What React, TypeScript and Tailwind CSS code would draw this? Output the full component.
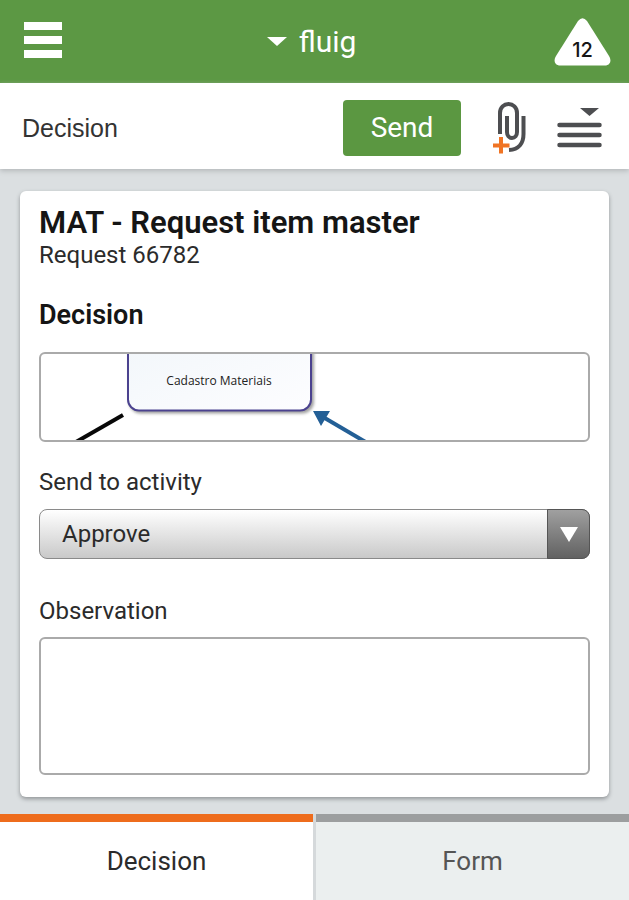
import { useState } from "react";

const Header = () => {
	return (
		<header className="grid grid-cols-[1fr_auto_1fr] items-center bg-[#5c9844] h-[83px] px-[18px]">
			<button type="button" aria-label="Menu" className="justify-self-start pb-1 pl-[6px]">
				<svg width="38" height="36" viewBox="0 0 38 36" fill="#fff">
					<rect width="38" height="8" />
					<rect y="14" width="38" height="8" />
					<rect y="28" width="38" height="8" />
				</svg>
			</button>
			<button type="button" className="flex items-center gap-3 pr-[6px] text-[30px] leading-9 text-white">
				<svg width="20" height="9" viewBox="0 0 20 9" fill="#fff">
					<path d="M0 0H20L10 9Z" />
				</svg>
				fluig
			</button>
			<button
				type="button"
				className="relative justify-self-end text-xl leading-6 font-medium text-[#151515] font-['Inter',sans-serif]"
			>
				<svg width="57" height="49" viewBox="0 0 57 49" fill="#fff">
					<path d="M24 4Q28.500-1.500 33 4L55 39C58 44 56 48.500 51 48.500H6C1 48.500-1 44 2 39Z" />
				</svg>
				<span className="absolute inset-x-0 bottom-1">12</span>
			</button>
		</header>
	);
};

const Toolbar = () => {
	return (
		<div className="relative flex items-center h-[86px] pt-[3px] pl-[22px] pr-[27px] bg-white shadow-[0_2px_5px_#b4b8ba]">
			<h1 className="flex-1 text-[25px] leading-8 text-[#333] font-['Liberation_Sans',sans-serif]">
				Decision
			</h1>
			<button type="button" className="h-14 w-[118px] rounded bg-[#5b9741] text-[28px] leading-8 text-white">
				Send
			</button>
			<button type="button" aria-label="Attach file" className="ml-8">
				<svg width="33" height="52" viewBox="0 0 33 52" fill="none">
					<g stroke="#4d4e51" strokeWidth="4">
						<path d="M7 32V11C7 5.500 11 2 15.500 2C20 2 24 5.500 24 11V30C24 33.500 22 36 19 36C16 36 14 33.500 14 30V14" />
						<path d="M30.500 14V32C30.500 41 26 47.500 16 48" />
					</g>
					<path d="M8 35V51.500M0 43.500H16.500" stroke="#f07424" strokeWidth="4" />
				</svg>
			</button>
			<button type="button" aria-label="Options" className="ml-[31px]">
				<svg width="45" height="40" viewBox="0 0 45 40">
					<path d="M23 0H42L32.500 8Z" fill="#4d4e51" />
					<path d="M2.500 17H42.500M2.500 27H42.500M2.500 37H42.500" stroke="#4d4e51" strokeWidth="4.500" strokeLinecap="round" />
				</svg>
			</button>
		</div>
	);
};

const Diagram = () => {
	return (
		<div className="mt-[21px] h-[90px] shrink-0 overflow-hidden rounded-md border-2 border-[#aaa]">
			<svg width="546" height="86" viewBox="0 0 546 86">
				<defs>
					<linearGradient id="activity" x1="0" y1="0" x2="1" y2="1">
						<stop offset="0" stopColor="#f1f6fa" />
						<stop offset="1" stopColor="#fdfdff" />
					</linearGradient>
					<filter id="shadow">
						<feDropShadow dx="2" dy="2" stdDeviation="1.500" floodColor="#777" floodOpacity="0.700" />
					</filter>
				</defs>
				<rect
					x="87"
					y="-30"
					width="183"
					height="86.500"
					rx="11"
					fill="url(#activity)"
					stroke="#4b438f"
					strokeWidth="2"
					filter="url(#shadow)"
				/>
				<text x="178" y="31" textAnchor="middle" fontSize="12" fill="#222" fontFamily="Open Sans, sans-serif">
					Cadastro Materiais
				</text>
				<path d="M35 88L82 61" stroke="#080808" strokeWidth="4" />
				<path d="M282 63L328 90" stroke="#235f96" strokeWidth="4" />
				<path d="M272 57H289L280 72Z" fill="#235f96" />
			</svg>
		</div>
	);
};

const RequestCard = () => {
	return (
		<section className="flex flex-1 flex-col rounded-md bg-white px-[19px] pt-4 pb-[22px] text-2xl leading-8 text-[#2b2b2b] shadow-[0_2px_4px_#909496]">
			<h2 className="text-[31px] leading-8 font-semibold text-[#151515]">MAT - Request item master</h2>
			<p>Request 66782</p>
			<h3 className="mt-7 text-[27px] leading-8 font-semibold text-[#151515]">Decision</h3>
			<Diagram />
			<label htmlFor="activity-select" className="mt-6">
				Send to activity
			</label>
			<div className="relative mt-[11px]">
				<select
					id="activity-select"
					className="h-[50px] w-full appearance-none rounded-lg border border-[#8a8a8a] bg-linear-to-b from-white to-[#c9c9c9] pl-[22px] text-2xl"
				>
					<option>Approve</option>
				</select>
				<div className="pointer-events-none absolute inset-y-0 right-0 flex w-[43px] items-center justify-center rounded-r-lg border border-[#555] bg-linear-to-b from-[#a0a0a0] to-[#626262]">
					<svg width="18" height="15" viewBox="0 0 18 15" fill="#fff">
						<path d="M0 0H18L9 15Z" />
					</svg>
				</div>
			</div>
			<label htmlFor="observation" className="mt-9">
				Observation
			</label>
			<textarea
				id="observation"
				className="mt-[10px] min-h-24 flex-1 resize-none rounded-md border-2 border-[#aaa] bg-white p-2"
			/>
		</section>
	);
};

const Tabs = () => {
	const [tab, setTab] = useState("decision");
	const active = "border-[#ee6c1c] bg-white text-[#2b2b2b]";
	const idle = "border-[#9c9e9f] bg-[#ebefef] text-[#555]";

	return (
		<nav className="grid grid-cols-2 gap-[3px] bg-[#d5d9db]">
			<button
				type="button"
				onClick={() => setTab("decision")}
				className={`h-[86px] border-t-8 text-[26px] leading-8 ${tab === "decision" ? active : idle}`}
			>
				Decision
			</button>
			<button
				type="button"
				onClick={() => setTab("form")}
				className={`h-[86px] border-t-8 text-[26px] leading-8 ${tab === "form" ? active : idle}`}
			>
				Form
			</button>
		</nav>
	);
};

const App = () => {
	return (
		<div className="flex min-h-screen flex-col bg-[#dbdfe1] font-['Roboto',sans-serif]">
			<Header />
			<Toolbar />
			<main className="flex flex-1 flex-col px-5 pt-[22px] pb-[17px]">
				<RequestCard />
			</main>
			<Tabs />
		</div>
	);
};

export default App;
